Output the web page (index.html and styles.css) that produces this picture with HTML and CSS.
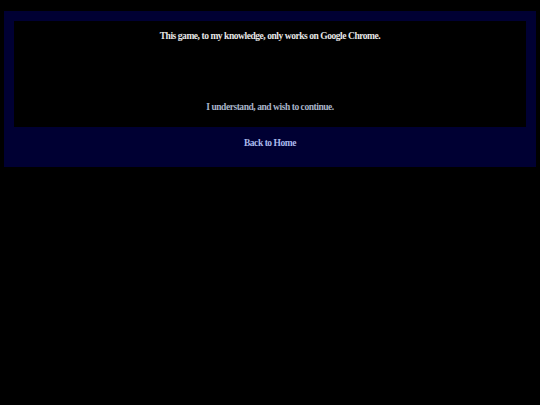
FILE: index.html
```html
<!DOCTYPE html>
<html>
<head>
    <title>Browser Notice</title>
    <meta charset="UTF-8">
    <link rel="stylesheet" href="styles.css">
</head>
<body>
    <div class="frame">
        <div class="notice">
            <p class="warning">This game, to my knowledge, only works on Google Chrome.</p>
            <a href="#" class="continue-link">I understand, and wish to continue.</a>
        </div>
        <div class="footer">
            <a href="#" class="home-link">Back to Home</a>
        </div>
    </div>
</body>
</html>
```

FILE: styles.css
```css
/* Browser warning page */
body {
    margin: 0;
    padding: 11px 4px;
    background: #000;
    font-family: "Liberation Serif", "Times New Roman", serif;
    font-weight: bold;
    font-size: 9.5px;
    letter-spacing: -0.45px;
}

.frame {
    background: #000033;
    padding: 10px 10px 0 10px;
}

.notice {
    background: #000;
    height: 106px;
    display: flex;
    flex-direction: column;
    align-items: center;
    justify-content: space-between;
    padding: 10px 0 15px;
    box-sizing: border-box;
}

.warning {
    margin: 0;
    color: #e6e6e6;
}

.continue-link {
    color: #a8b4c8;
    text-decoration: none;
}

.footer {
    height: 40px;
    box-sizing: border-box;
    padding-top: 11px;
    text-align: center;
}

.home-link {
    color: #aab8ec;
    text-decoration: none;
}
```
